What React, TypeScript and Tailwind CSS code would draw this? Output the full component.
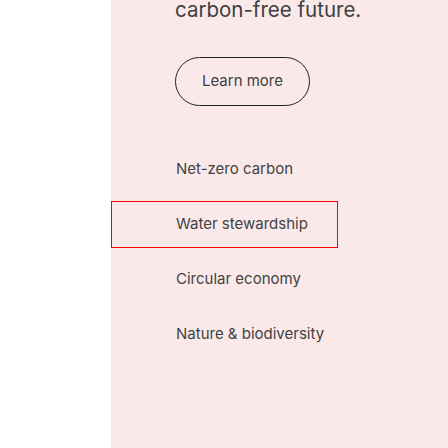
import React from "react";

const topics = ["Net-zero carbon", "Water stewardship", "Circular economy", "Nature & biodiversity"];

const App = () => {
    return (
        <div className="flex h-[448px] w-full overflow-hidden bg-white font-['Inter',sans-serif] text-[#404343]">
            <div className="w-[111px] shrink-0" />
            <div className="flex-1 bg-[#fbe9e9]">
                <div className="pl-16">
                    <h2 className="-mt-[4px] text-[20.5px] leading-[28px] text-[#3c4043]">
                        carbon-free future.
                    </h2>
                    <button className="mt-[33px] flex h-[49px] w-[135px] items-center justify-center rounded-full border border-[#202124] text-[15px] text-[#3c4043]">
                        Learn more
                    </button>
                </div>
                <ul className="mt-[40px] flex flex-col gap-2">
                    {topics.map((t, i) => (
                        <li
                            key={t}
                            className={
                                "flex h-[47px] w-[227px] items-center pl-16 text-[15px] " +
                                (i === 1 ? "border border-[#ff0000]" : "border border-transparent")
                            }
                        >
                            {t}
                        </li>
                    ))}
                </ul>
            </div>
        </div>
    );
};

export default App;
